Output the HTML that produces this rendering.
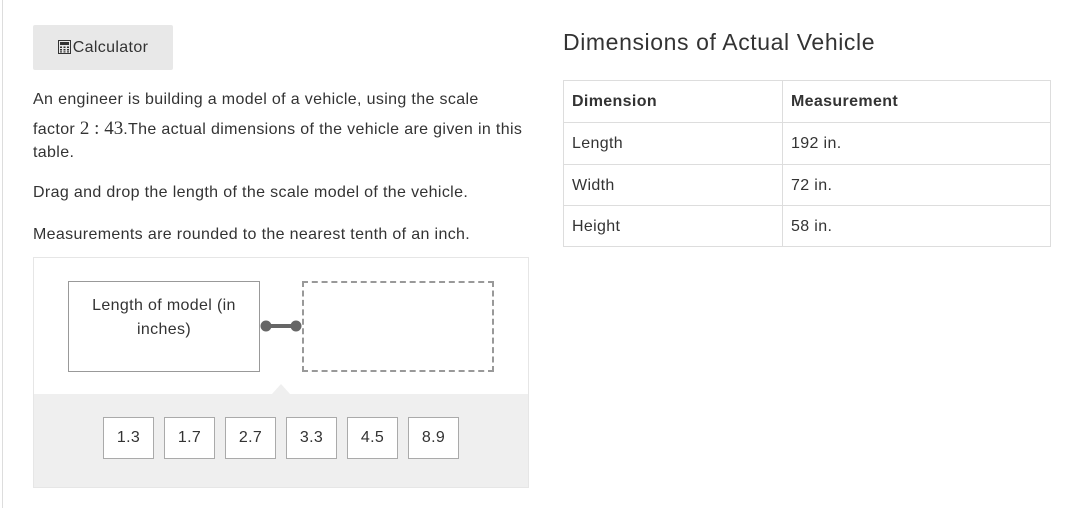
<!DOCTYPE html>
<html><head><style>
body{margin:0;width:1084px;height:508px;background:#fff;font-family:"Liberation Sans",sans-serif;color:#333;position:relative;overflow:hidden;letter-spacing:0.35px}
.edge{position:absolute;left:2px;top:0;width:1px;height:508px;background:#ddd}
.abs{position:absolute}
.btn{left:33px;top:25px;width:140px;height:45px;background:#e8e8e8;border-radius:2px;font-size:16px;line-height:45px;text-align:center}
p{margin:0;font-size:16px;position:absolute;left:33px;white-space:nowrap}
.m{font-family:"Liberation Serif",serif;font-size:19px;letter-spacing:0}
.box{left:33px;top:257px;width:494px;height:229px;border:1px solid #e6e6e6;background:#fff}
.gray{left:34px;top:394px;width:494px;height:93px;background:#efefef}
.tile{top:417px;border:1px solid #aaa;background:#fff;font-size:16px;line-height:40px;text-align:center;box-sizing:border-box;width:51px;height:42px}
table{position:absolute;left:563px;top:80px;border-collapse:collapse;font-size:16px}
td{border:1px solid #ddd;padding:0 8px;height:40px;vertical-align:top;padding-top:12px;box-sizing:border-box}
</style></head><body>
<div class="edge"></div>
<div class="abs btn"><svg width="13" height="14" viewBox="0 0 13 14" style="vertical-align:-2px;margin-right:2px"><rect x="0.5" y="0.5" width="12" height="13" fill="none" stroke="#333"/><rect x="2" y="2" width="9" height="3" fill="#333"/><g fill="#333"><rect x="2" y="6.5" width="2" height="1.5"/><rect x="5.5" y="6.5" width="2" height="1.5"/><rect x="9" y="6.5" width="2" height="1.5"/><rect x="2" y="9" width="2" height="1.5"/><rect x="5.5" y="9" width="2" height="1.5"/><rect x="9" y="9" width="2" height="1.5"/><rect x="2" y="11.3" width="2" height="1.2"/><rect x="5.5" y="11.3" width="2" height="1.2"/><rect x="9" y="11.3" width="2" height="1.2"/></g></svg>Calculator</div>
<p style="top:91px">An engineer is building a model of a vehicle, using the scale</p>
<p style="top:118px">factor <span class="m">2 : 43</span>.The actual dimensions of the vehicle are given in this</p>
<p style="top:144px">table.</p>
<p style="top:184px">Drag and drop the length of the scale model of the vehicle.</p>
<p style="top:226px">Measurements are rounded to the nearest tenth of an inch.</p>
<div class="abs box"></div>
<div class="abs gray"></div>
<div class="abs" style="left:272px;top:384px;width:0;height:0;border-left:9px solid transparent;border-right:9px solid transparent;border-bottom:10px solid #efefef"></div>
<div class="abs" style="left:68px;top:281px;border:1px solid #999;font-size:16px;text-align:center;line-height:24px;padding-top:12px;box-sizing:border-box;width:192px;height:91px">Length of model (in<br>inches)</div>
<div class="abs" style="left:302px;top:281px;width:192px;height:91px;border:2px dashed #999;box-sizing:border-box"></div>
<svg class="abs" style="left:259px;top:319px" width="46" height="14"><line x1="7" y1="7" x2="38" y2="7" stroke="#666" stroke-width="4"/><circle cx="7" cy="7" r="5.5" fill="#666"/><circle cx="37" cy="7" r="5.5" fill="#666"/></svg>
<div class="abs tile" style="left:103px">1.3</div>
<div class="abs tile" style="left:164px">1.7</div>
<div class="abs tile" style="left:225px">2.7</div>
<div class="abs tile" style="left:286px">3.3</div>
<div class="abs tile" style="left:347px">4.5</div>
<div class="abs tile" style="left:408px">8.9</div>
<div class="abs" style="left:563px;top:29px;font-size:23px;letter-spacing:0.6px">Dimensions of Actual Vehicle</div>
<table>
<tr><td style="width:219px;height:42px;font-weight:bold">Dimension</td><td style="width:268px;font-weight:bold">Measurement</td></tr>
<tr><td style="height:42px">Length</td><td>192 in.</td></tr>
<tr><td style="height:41px">Width</td><td>72 in.</td></tr>
<tr><td style="height:41px">Height</td><td>58 in.</td></tr>
</table>
</body></html>
